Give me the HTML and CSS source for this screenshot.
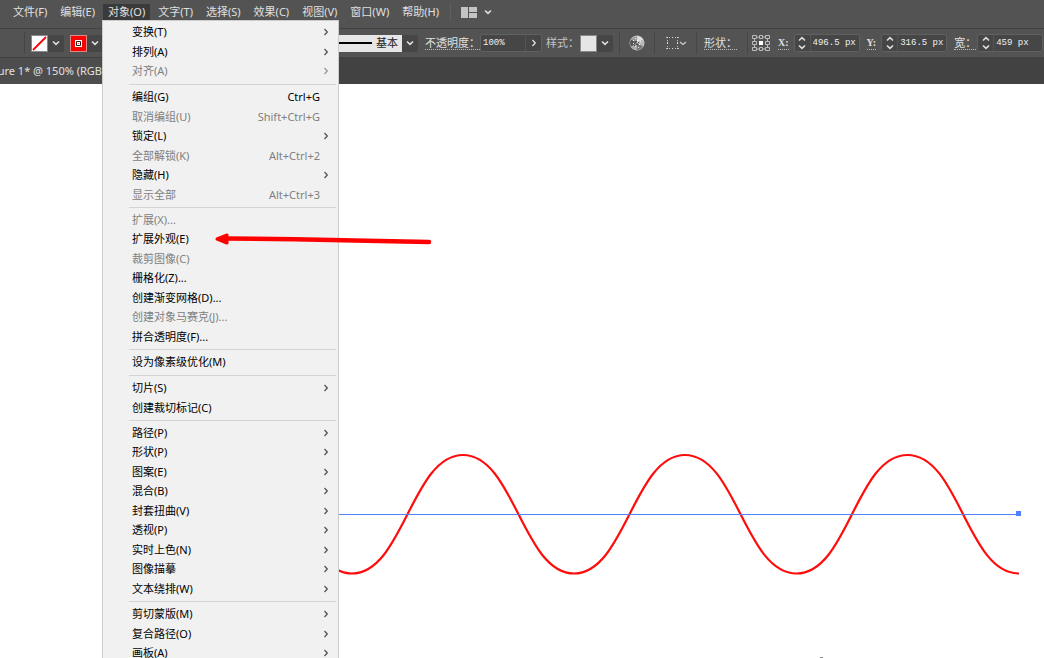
FILE: index.html
```html
<!DOCTYPE html>
<html lang="zh-CN">
<head>
<meta charset="utf-8">
<title>对象菜单</title>
<link rel="stylesheet" href="styles.css">
</head>
<body>
<svg width="0" height="0" class="defs" aria-hidden="true">
  <symbol id="down" viewBox="0 0 8 8"><path d="M1 2.5 4 5.3 7 2.5" fill="none" stroke="currentColor" stroke-width="1.6"/></symbol>
  <symbol id="up" viewBox="0 0 8 8"><path d="M1 5.5 4 2.7 7 5.5" fill="none" stroke="currentColor" stroke-width="1.6"/></symbol>
  <symbol id="right" viewBox="0 0 8 8"><path d="M2.5 1 5.3 4 2.5 7" fill="none" stroke="currentColor" stroke-width="1.3"/></symbol>
</svg>
<div class="app">
  <header class="menubar">
    <nav class="menus">
      <button>文件(F)</button>
      <button>编辑(E)</button>
      <button class="active">对象(O)</button>
      <button>文字(T)</button>
      <button>选择(S)</button>
      <button>效果(C)</button>
      <button>视图(V)</button>
      <button>窗口(W)</button>
      <button>帮助(H)</button>
    </nav>
    <span class="rule"></span>
    <button class="workspace" aria-label="工作区">
      <svg width="16" height="11" viewBox="0 0 16 11"><path d="M0 0h7v11H0zM8 0h8v5H8zM8 6h8v5H8z" fill="#c4c4c4"/></svg>
      <svg class="chev"><use href="#down"/></svg>
    </button>
  </header>

  <div class="controls">
    <div class="group paints">
      <span class="rule"></span>
      <div class="picker">
        <button class="swatch" aria-label="填色"><svg width="17" height="17" viewBox="0 0 17 17"><path d="M2 15 15 2" stroke="#f00" stroke-width="1.8"/></svg></button>
        <button class="drop" aria-label="填色选项"><svg class="chev"><use href="#down"/></svg></button>
      </div>
      <div class="picker">
        <button class="swatch stroke" aria-label="描边"><svg width="17" height="17" viewBox="0 0 17 17"><path d="M5 5h7v7H5z" fill="#fff"/><path d="M6.500 6.500h4v4h-4z" fill="#fff" stroke="#222"/><path d="M8 8h1v1H8z" fill="#f44"/></svg></button>
        <button class="drop" aria-label="描边选项"><svg class="chev"><use href="#down"/></svg></button>
      </div>
    </div>
    <div class="picker brush">
      <button class="profile"><span class="line"></span>基本</button>
      <button class="drop" aria-label="画笔定义"><svg class="chev"><use href="#down"/></svg></button>
    </div>
    <div class="group opacity">
      <label class="label linked" for="opacity">不透明度：</label>
      <div class="field"><input id="opacity" value="100%"><button class="drop" aria-label="不透明度选项"><svg class="chev"><use href="#right"/></svg></button></div>
    </div>
    <div class="group style">
      <span class="label">样式：</span>
      <div class="picker">
        <button class="swatch plain" aria-label="图形样式"></button>
        <button class="drop" aria-label="样式选项"><svg class="chev"><use href="#down"/></svg></button>
      </div>
    </div>
    <span class="rule"></span>
    <button class="icon recolor" aria-label="重新着色图稿">
      <svg width="16" height="16" viewBox="0 0 16 16"><circle cx="8" cy="8" r="7" fill="#999" stroke="#ccc"/><path d="M8 8V1a7 7 0 0 1 6 3.500z" fill="#ddd"/><path d="M8 8 14 4.500A7 7 0 0 1 14 11.500z" fill="#bbb"/><path d="M8 8 14 11.500A7 7 0 0 1 8 15z" fill="#777"/><path d="M8 8v7a7 7 0 0 1-6-3.500z" fill="#aaa"/><path d="M8 8 2 11.500a7 7 0 0 1 0-7z" fill="#555"/><path d="M4 5.500h1M4 8.500h1M6 11.500h1M8 5.500h1M10 9.500h1M11 6.500h1M6 3.500h1M9 12.500h1" stroke="#eee"/><path d="M6 6.500h2M7 9.500h2M9 7.500h1M5 10.500h1" stroke="#444"/></svg>
    </button>
    <span class="rule"></span>
    <button class="icon align" aria-label="对齐">
      <svg width="22" height="14" viewBox="0 0 22 14"><path d="M1 1.500h13M1 12.500h13M2.500 1v12M12.500 1v12" fill="none" stroke="#c0c0c0" stroke-dasharray="1 2"/><path d="M2 1h1v1H2zM12 1h1v1h-1zM2 12h1v1H2zM12 12h1v1h-1zM7 1h1v1H7zM7 12h1v1H7zM2 6h1v2H2zM12 6h1v2h-1z" fill="#e0e0e0"/><path d="m15 6 3 2.500L21 6" fill="none" stroke="#ccc" stroke-width="1.300"/></svg>
    </button>
    <span class="rule"></span>
    <button class="label linked shape">形状：</button>
    <span class="rule"></span>
    <button class="icon refpoint" aria-label="参考点">
      <svg width="18" height="18" viewBox="0 0 18 18" fill="none" stroke="#bbb"><path d="M.5 1.500h4v3h-4zM7.500 1.500h3v3h-3zM13.500 1.500h4v3h-4zM.5 13.500h4v3h-4zM7.500 13.500h3v3h-3zM13.500 13.500h4v3h-4zM.5 7.500h4v3h-4zM13.500 7.500h4v3h-4zM4.500 3h3M10.500 3h3M4.500 15h3M10.500 15h3M2.500 4.500v3M2.500 10.500v3M15.500 4.500v3M15.500 10.500v3"/><path d="M7 7h4v4H7z" fill="#fff" stroke="none"/></svg>
    </button>
    <div class="group coords">
      <label class="label linked mono" for="x">X:</label>
      <div class="field number"><button class="step" aria-label="调整 X"><svg class="chev"><use href="#up"/></svg><svg class="chev"><use href="#down"/></svg></button><input id="x" value="496.5 px"></div>
      <label class="label linked mono" for="y">Y:</label>
      <div class="field number"><button class="step" aria-label="调整 Y"><svg class="chev"><use href="#up"/></svg><svg class="chev"><use href="#down"/></svg></button><input id="y" value="316.5 px"></div>
      <label class="label linked width" for="w">宽：</label>
      <div class="field number"><button class="step" aria-label="调整宽"><svg class="chev"><use href="#up"/></svg><svg class="chev"><use href="#down"/></svg></button><input id="w" value="459 px"></div>
    </div>
  </div>

  <div class="tabs"><div class="tab"><span>ure 1* @ 150% (RGB</span></div></div>

  <main class="canvas">
    <svg width="1044" height="574" viewBox="0 84 1044 574">
      <path d="M241 455C292 455 301 573.500 352 573.500S412 455 463 455 523 573.500 574 573.500 634 455 685 455 745 573.500 796.500 573.500 856 455 907.500 455 967 573.500 1019 573.500" fill="none" stroke="#ff0c0c" stroke-width="2.200"/>
      <path d="M241 514.500h778" stroke="#5583f5"/>
      <path d="M1016 511h5v5h-5z" fill="#4f80ff"/>
      <path d="M820 657.500h3" stroke="#888"/>
    </svg>
  </main>

  <div class="dropdown" role="menu">
    <ul class="section">
      <li><button>变换(T)<svg class="chev"><use href="#right"/></svg></button></li>
      <li><button>排列(A)<svg class="chev"><use href="#right"/></svg></button></li>
      <li><button disabled>对齐(A)<svg class="chev"><use href="#right"/></svg></button></li>
    </ul>
    <ul class="section">
      <li><button>编组(G)<kbd>Ctrl+G</kbd></button></li>
      <li><button disabled>取消编组(U)<kbd>Shift+Ctrl+G</kbd></button></li>
      <li><button>锁定(L)<svg class="chev"><use href="#right"/></svg></button></li>
      <li><button disabled>全部解锁(K)<kbd>Alt+Ctrl+2</kbd></button></li>
      <li><button>隐藏(H)<svg class="chev"><use href="#right"/></svg></button></li>
      <li><button disabled>显示全部<kbd>Alt+Ctrl+3</kbd></button></li>
    </ul>
    <ul class="section">
      <li><button disabled>扩展(X)...</button></li>
      <li><button>扩展外观(E)</button></li>
      <li><button disabled>裁剪图像(C)</button></li>
      <li><button>栅格化(Z)...</button></li>
      <li><button>创建渐变网格(D)...</button></li>
      <li><button disabled>创建对象马赛克(J)...</button></li>
      <li><button>拼合透明度(F)...</button></li>
    </ul>
    <ul class="section">
      <li><button>设为像素级优化(M)</button></li>
    </ul>
    <ul class="section">
      <li><button>切片(S)<svg class="chev"><use href="#right"/></svg></button></li>
      <li><button>创建裁切标记(C)</button></li>
    </ul>
    <ul class="section">
      <li><button>路径(P)<svg class="chev"><use href="#right"/></svg></button></li>
      <li><button>形状(P)<svg class="chev"><use href="#right"/></svg></button></li>
      <li><button>图案(E)<svg class="chev"><use href="#right"/></svg></button></li>
      <li><button>混合(B)<svg class="chev"><use href="#right"/></svg></button></li>
      <li><button>封套扭曲(V)<svg class="chev"><use href="#right"/></svg></button></li>
      <li><button>透视(P)<svg class="chev"><use href="#right"/></svg></button></li>
      <li><button>实时上色(N)<svg class="chev"><use href="#right"/></svg></button></li>
      <li><button>图像描摹<svg class="chev"><use href="#right"/></svg></button></li>
      <li><button>文本绕排(W)<svg class="chev"><use href="#right"/></svg></button></li>
    </ul>
    <ul class="section">
      <li><button>剪切蒙版(M)<svg class="chev"><use href="#right"/></svg></button></li>
      <li><button>复合路径(O)<svg class="chev"><use href="#right"/></svg></button></li>
      <li><button>画板(A)<svg class="chev"><use href="#right"/></svg></button></li>
    </ul>
  </div>

  <svg class="arrow" width="220" height="14" viewBox="0 0 220 14">
    <path d="M10 5.500 80 6.200 140 7.500 214 9" fill="none" stroke="#f00" stroke-width="4.500" stroke-linecap="round" stroke-linejoin="round"/>
    <path d="M2 6 12 2v8z" fill="#f00" stroke="#f00" stroke-width="3" stroke-linejoin="round"/>
  </svg>
</div>
</body>
</html>
```

FILE: styles.css
```css
* {
  box-sizing: border-box;
}

body {
  margin: 0;
  font: 11px/16px "Noto Sans", "Noto Sans CJK SC", sans-serif;
  color: #e0e0e0;
}

button,
input {
  margin: 0;
  padding: 0;
  border: 0;
  background: none;
  color: inherit;
  font: inherit;
}

.defs {
  position: absolute;
}

.app {
  position: relative;
  display: flex;
  flex-direction: column;
  height: 100vh;
  overflow: hidden;
  background: #fff;
}

.chev {
  flex: none;
  width: 8px;
  height: 8px;
}

.rule {
  flex: none;
  width: 1px;
  height: 22px;
  background: #464646;
}

/* Menu bar */

.menubar {
  flex: none;
  display: flex;
  align-items: center;
  height: 28px;
  padding: 0 0 4px 8px;
  background: #535353;
}

.menus {
  display: flex;
  gap: 3px;
}

.menus button {
  height: 16px;
  padding: 0 5px;
  white-space: nowrap;
}

.menus .active {
  background: #3a3a3a;
}

.menubar .rule {
  height: 18px;
  margin: 0 10px 0 6px;
  background: #606060;
}

.workspace {
  display: flex;
  align-items: center;
  gap: 7px;
}

/* Control bar */

.controls {
  flex: none;
  display: flex;
  align-items: center;
  height: 30px;
  border-top: 1px solid #424242;
  border-bottom: 1px solid #404040;
  background: #535353;
}

.group,
.picker,
.field {
  flex: none;
  display: flex;
  align-items: center;
}

.paints {
  gap: 6px;
  width: 102px;
  margin-right: 200px;
  padding-left: 24px;
}

.swatch {
  width: 17px;
  height: 17px;
  background: #fff;
  outline: 1px solid #888;
  outline-offset: -1px;
}

.swatch svg {
  display: block;
}

.swatch.stroke {
  background: #f00;
  outline-color: #d88;
}

.swatch.plain {
  background: #e6e6e6;
}

.drop {
  display: flex;
  align-items: center;
  justify-content: center;
  width: 16px;
  height: 17px;
  background: #464646;
  border-radius: 0 2px 2px 0;
}

.brush {
  margin-right: 7px;
}

.profile {
  display: flex;
  align-items: center;
  justify-content: flex-end;
  gap: 4px;
  width: 100px;
  height: 17px;
  padding-right: 4px;
  background: #e6e6e6;
  color: #222;
}

.line {
  width: 70px;
  height: 2px;
  background: #000;
}

.label {
  flex: none;
  line-height: 12px;
  white-space: nowrap;
}

.linked {
  border-bottom: 1px dotted #bbb;
}

.field {
  height: 18px;
  border: 1px solid #606060;
  border-radius: 2px;
  background: #464646;
}

.field input {
  width: 44px;
  height: 14px;
  padding-left: 2px;
  font: 9px/14px "Liberation Mono", monospace;
  color: #f0f0f0;
}

.field .drop {
  height: 16px;
  border-left: 1px solid #555;
}

.opacity .label {
  width: 55px;
}

.style {
  margin: 0 6px 0 4px;
}

.style .label {
  width: 34px;
  color: #c4c4c4;
}

.icon {
  flex: none;
  display: flex;
}

.recolor {
  margin: 0 9px;
}

.align {
  margin: 0 9px 0 10px;
}

.shape {
  margin: 0 10px 0 7px;
}

.refpoint {
  margin: 0 8px 0 4px;
}

.mono {
  font: bold 10px/12px "Liberation Serif", serif;
}

.coords .field {
  margin: 0 7px 0 5px;
}

.coords .width + .field {
  margin-left: 1px;
}

.step {
  display: flex;
  flex-direction: column;
  align-items: center;
  justify-content: space-between;
  width: 16px;
  height: 16px;
  border-right: 1px solid #555;
}

.number input {
  width: 48px;
}

/* Document tabs */

.tabs {
  flex: none;
  display: flex;
  height: 26px;
  background: #424242;
}

.tab {
  display: flex;
  align-items: center;
  justify-content: flex-end;
  width: 102px;
  overflow: hidden;
  white-space: nowrap;
  background: #4d4d4d;
}

.canvas {
  flex: 1;
  min-height: 0;
  overflow: hidden;
}

.canvas svg {
  display: block;
}

/* Object menu */

.dropdown {
  position: absolute;
  top: 20px;
  left: 102px;
  width: 237px;
  padding: 1px 2px 2px 26px;
  border: 1px solid #ccc;
  background: #f1f1f1;
  color: #000;
}

.section {
  margin: 0;
  padding: 0;
  list-style: none;
}

.section + .section {
  margin-top: 3px;
  padding-top: 2px;
  border-top: 1px solid #d4d4d4;
}

.section li {
  height: 20px;
}

.section li:nth-child(even),
.section:nth-child(3n) li:nth-child(odd) {
  height: 19px;
}

.section:nth-child(3n) li:nth-child(even) {
  height: 20px;
}

.section button {
  display: flex;
  align-items: center;
  justify-content: space-between;
  width: 100%;
  height: 100%;
  padding: 0 6px 0 3px;
  white-space: nowrap;
}

.section button:disabled {
  color: #808080;
}

.section .chev {
  color: #555;
}

.section button:disabled .chev {
  color: #999;
}

.section kbd {
  margin-right: 10px;
  font: inherit;
}

.arrow {
  position: absolute;
  top: 233px;
  left: 215px;
}
```
